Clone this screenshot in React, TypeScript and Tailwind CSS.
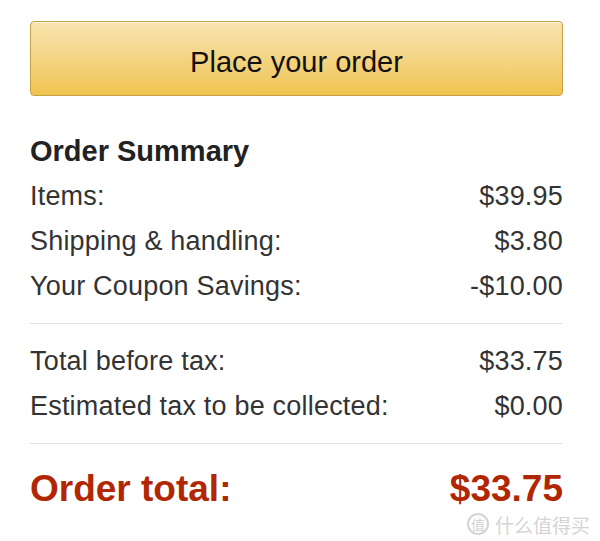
import React from "react";

const rows = [
  { label: "Items:", value: "$39.95" },
  { label: "Shipping & handling:", value: "$3.80" },
  { label: "Your Coupon Savings:", value: "-$10.00" },
];

const totals = [
  { label: "Total before tax:", value: "$33.75" },
  { label: "Estimated tax to be collected:", value: "$0.00" },
];

const Row = ({ label, value }: { label: string; value: string }) => (
  <div className="flex h-[45px] items-center justify-between text-[27px] leading-none tracking-[0.2px] text-[#333]">
    <span>{label}</span>
    <span>{value}</span>
  </div>
);

export default function App() {
  return (
    <div
      className="relative h-[541px] w-[600px] overflow-hidden bg-white"
      style={{ fontFamily: '"Liberation Sans", Arial, sans-serif' }}
    >
      <div className="ml-[30px] w-[533px] pt-[21px]">
        {/* Button */}
        <button className="flex h-[75px] w-full items-center justify-center rounded-[4px] border border-[#c6a046] bg-gradient-to-b from-[#f8e4b0] to-[#f0c34e] pt-[8px] text-[29px] text-[#111] shadow-[inset_0_1px_0_rgba(255,255,255,0.6)]">
          Place your order
        </button>

        {/* Summary */}
        <div className="mt-[37px] h-[36px] text-[29px] font-bold leading-[36px] text-[#222]">
          Order Summary
        </div>
        <div className="mt-[5px]">
          {rows.map((r) => (
            <Row key={r.label} {...r} />
          ))}
        </div>
        <div className="mt-[14px] h-px bg-[#e3e3e3]" />
        <div className="mt-[15px]">
          {totals.map((r) => (
            <Row key={r.label} {...r} />
          ))}
        </div>
        <div className="mt-[14px] h-px bg-[#e3e3e3]" />
        <div className="mt-[19px] flex h-[50px] items-center justify-between text-[37px] font-bold leading-none text-[#b12704]">
          <span>Order total:</span>
          <span>$33.75</span>
        </div>
      </div>

      {/* Watermark */}
      <div
        className="absolute bottom-[6px] right-[10px] flex items-center gap-[6px] text-[19px] text-[#d4d4d4]"
        style={{ fontFamily: '"Noto Sans CJK SC", sans-serif' }}
      >
        <span className="flex h-[22px] w-[22px] items-center justify-center rounded-full border-2 border-[#d4d4d4] text-[14px] leading-none">
          值
        </span>
        <span className="leading-none">什么值得买</span>
      </div>
    </div>
  );
}
